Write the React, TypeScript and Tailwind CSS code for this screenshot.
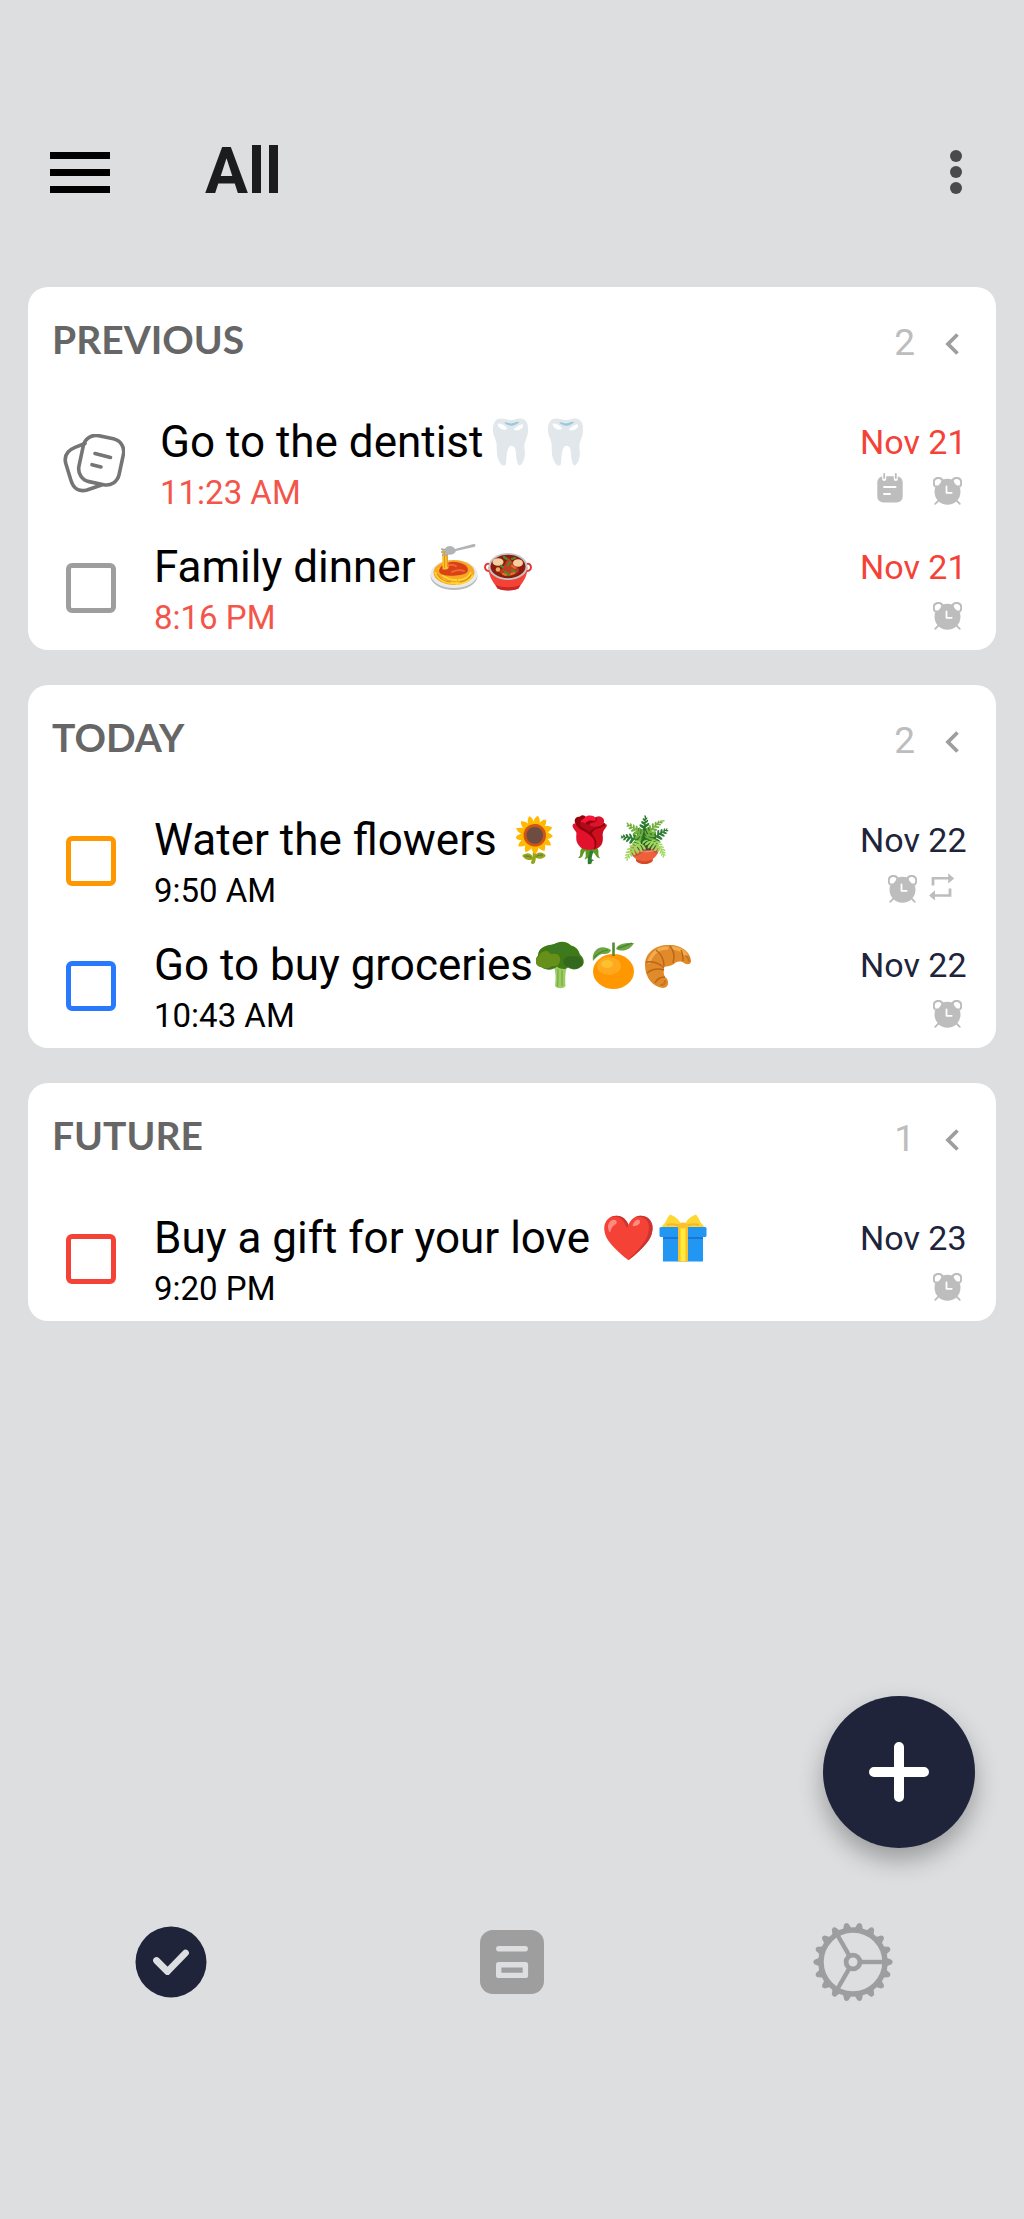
import React from "react";

type TaskItem = {
  title: string;
  emoji?: string;
  pictures?: (() => React.ReactElement)[];
  time: string;
  date: string;
  box?: string;
  note?: boolean;
  icons: ("calendar" | "alarm" | "repeat")[];
  timeColor: string;
  dateColor: string;
};

type Group = { name: string; count: number; items: TaskItem[] };

function Picture({ label, children }: { label: string; children: React.ReactNode }) {
  return (
    <svg role="img" aria-label={label} viewBox="0 0 48 48" fill="none" className="mx-[3px] inline-block size-12 align-[-9px]">
      {children}
    </svg>
  );
}

function Pasta() {
  return (
    <Picture label="spaghetti">
      <ellipse cx="24" cy="33" rx="23.500" ry="14" fill="#b8bcbe" />
      <ellipse cx="24" cy="31" rx="23.500" ry="14" fill="#e8eaeb" />
      <ellipse cx="24" cy="29.500" rx="20.500" ry="12.500" fill="#f9a825" />
      <path d="M5 29c3 8 10 11 18 11M9 25c1 8 9 12 18 12M26 41c8 0 15-4 17-9M28 37c6 0 11-3 13-8M12 36c5 4 11 5 16 4" stroke="#fdd835" strokeWidth="1.800" />
      <path d="M7 31c4 6 9 8 14 8M30 39c5-1 9-3 11-7" stroke="#e08a16" strokeWidth="1.200" />
      <path d="M9 28c0-4 5-8 12-9 8-1 17 3 17 8 0 4-6 5-12 5.500S9 33 9 28z" fill="#d84315" />
      <path d="M13 26c4-4 9-5 13-3M22 29c4-2 9-2 12-1" stroke="#f4683c" strokeWidth="1.800" strokeLinecap="round" />
      <path d="M12 7h5.500l1 18c-2 2-5 2-6 0z" fill="#fbc02d" />
      <path d="M14.500 8v17M17 9l.6 15" stroke="#e69518" strokeWidth="1" />
      <path d="M11 6l6 1M11 9l6 0M12 12h6" stroke="#a5a9ab" strokeWidth="1.500" />
      <path d="M15 5.500c3-4 8-3 10 .5L43.500 1c2.500-.5 2.500 2.500.5 3L26 8c-2 4-7 5-10 2.500z" fill="#b0b4b6" />
    </Picture>
  );
}

function Pot() {
  return (
    <Picture label="pot of food">
      <path d="M7 22C3 19 1 22 1 24.500S4 29 9 28M41 22c4-3 6 0 6 2.500S44 29 39 28" stroke="#e53935" strokeWidth="2" />
      <path d="M4.500 24h39c0 12-7 17-9 21.500-5 2.500-16 2.500-21 0C11.500 41 4.500 36 4.500 24z" fill="#f44336" />
      <path d="M11.500 42c7 3 18 3 25 0l-2 3.500c-5 2.500-16 2.500-21 0z" fill="#c62828" />
      <ellipse cx="24" cy="23.500" rx="19.500" ry="13.500" fill="#c3c7c9" />
      <ellipse cx="24" cy="23.500" rx="17.500" ry="11.800" fill="#8e1b10" />
      <path d="M15 29c5-4 6-10 10-14 3 5 9 6 10 13-5 6-14 7-20 1z" fill="#bf3d20" />
      <ellipse cx="14" cy="19" rx="5.500" ry="3.800" fill="#f4cf9f" />
      <ellipse cx="34" cy="20" rx="5" ry="3.800" fill="#f4cf9f" />
      <circle cx="14" cy="26.500" r="2.300" fill="#e8b05f" />
      <path d="M20 14l3 2M21 29l4 3M28 27l3 2M24 22l2-3M17 23l2 1M31 15l-3 1" stroke="#4c8c2b" strokeWidth="2.200" strokeLinecap="round" />
      <path d="M28 23l3 2M19 31l3 1M27 31l3-1" stroke="#ef6c28" strokeWidth="2" strokeLinecap="round" />
    </Picture>
  );
}

function Broccoli() {
  return (
    <Picture label="broccoli">
      <path d="M16 22h17c-4 5-4 15-3.500 23-2 3-8 3-10.500 0 1-8 1-17-3-23z" fill="#9ccc65" />
      <path d="M22 28c0 7 0 12-.5 18M26 29v16" stroke="#7cb342" strokeWidth="1.500" />
      <path d="M18 3.500C23-1 32 .5 35 4.500c6 1 8 6 9 9 5 4 5 11 0 13-4 3-9 2-12 0-4 3-9 1-11-1-4 4-11 4-15 1-7-1-8-8-4-12 0-7 7-11 16-11z" fill="#3f7a14" />
      <path d="M3 15c2-6 10-6 12-3 6-1 10 3 9 8-1 5-5 6-8 5-3 3-8 3-11 1-6-1-7-8-2-11z" fill="#66901a" />
      <path d="M29 17c4-3 9-1 10-2 6 0 10 7 6 10-3 4-9 3-12 1-6-1-7-6-4-9z" fill="#33691e" />
      <path d="M13 5c5-3 13-4 17-1 5 2 6 7 3 10-7 2-13-2-17-1-4 0-5-5-3-8z" fill="#3d7a1f" />
    </Picture>
  );
}

function Tangerine() {
  return (
    <Picture label="tangerine">
      <ellipse cx="23.500" cy="30.500" rx="20.500" ry="17.500" fill="#ff9800" />
      <ellipse cx="19" cy="25" rx="12" ry="9" fill="#ffa91f" />
      <ellipse cx="17" cy="23" rx="6" ry="4" fill="#fdc02f" />
      <path d="M23.500 15V1.500" stroke="#558b2f" strokeWidth="2.600" />
      <path d="M3 20C1 9 11 2 21 9c-1 4-5 4-9 4-4 1-6 4-9 7z" fill="#6da544" />
      <path d="M26 8c2-6 10-6 18-6-3 6-11 10-18 6z" fill="#6da544" />
      <path d="M4 17c3-5 8-7 14-8M28 7c5-1 9-3 14-5" stroke="#43852c" strokeWidth="1.200" />
    </Picture>
  );
}

function Croissant() {
  return (
    <Picture label="croissant">
      <path d="M1 24C1 12 11 4 24 4c12-1 23 7 23 16 0 4-4 4-7 2-3-2-7-2-10 1-3 2-7 2-10 3 0 4-1 6 1 10 4 2 5 11-2 11C9 46 1 37 1 24z" fill="#e08a2a" />
      <path d="M5 21C8 12 15 7 23 7M28 7c7 0 11 3 14 7" stroke="#f0ac4e" strokeWidth="3.500" strokeLinecap="round" />
      <path d="M12 9c4 3 8 9 8 16M26 5c4 5 5 11 3 17M37 9c2 4 2 8 2 11M2 21c6-1 14 1 18 6M3 32c5-4 11-5 17-3M11 42c2-4 6-6 10-6" stroke="#b9651a" strokeWidth="1.400" />
      <path d="M42 15c3 2 3 4 3 5M17 44c2 0 4-1 4-4" stroke="#c9741e" strokeWidth="2" strokeLinecap="round" />
    </Picture>
  );
}

function Gift() {
  return (
    <Picture label="gift">
      <path d="M23 13C18 14 6 15 2.500 12 7 10 8 3 11 .5 16 2 22 7 23 13zM25 13c5 1 17 2 20.500-1C41 10 40 3 37 .5 32 2 26 7 25 13z" fill="#fdd835" />
      <path d="M8 11c4-1 10-1 15 2M40 11c-4-1-10-1-15 2" stroke="#f9b52b" strokeWidth="2" />
      <path d="M4 20h40v27.500H4z" fill="#2196f3" />
      <path d="M4 22h40v3H4z" fill="#1976d2" />
      <rect x="0.500" y="13" width="47" height="10" rx="1.500" fill="#2196f3" />
      <path d="M19 10h10v37.500H19z" fill="#fbc02d" />
      <path d="M21.500 12h5v35.500h-5z" fill="#ffeb3b" />
      <ellipse cx="24" cy="11.500" rx="5" ry="3" fill="#fbc02d" />
    </Picture>
  );
}

const RED = "text-[#f44336]";
const NAVY = "text-[#20243b]";

const groups: Group[] = [
  {
    name: "PREVIOUS",
    count: 2,
    items: [
      { title: "Go to the dentist", emoji: "🦷🦷", time: "11:23 AM", date: "Nov 21", note: true, icons: ["calendar", "alarm"], timeColor: "text-[#f4554a]", dateColor: RED },
      { title: "Family dinner ", pictures: [Pasta, Pot], time: "8:16 PM", date: "Nov 21", box: "border-[#9e9e9e]", icons: ["alarm"], timeColor: "text-[#f4554a]", dateColor: RED },
    ],
  },
  {
    name: "TODAY",
    count: 2,
    items: [
      { title: "Water the flowers ", emoji: "🌻🌹🪴", time: "9:50 AM", date: "Nov 22", box: "border-[#ff9800]", icons: ["alarm", "repeat"], timeColor: "text-black", dateColor: NAVY },
      { title: "Go to buy groceries", pictures: [Broccoli, Tangerine, Croissant], time: "10:43 AM", date: "Nov 22", box: "border-[#2979ff]", icons: ["alarm"], timeColor: "text-black", dateColor: NAVY },
    ],
  },
  {
    name: "FUTURE",
    count: 1,
    items: [
      { title: "Buy a gift for your love ", emoji: "❤️", pictures: [Gift], time: "9:20 PM", date: "Nov 23", box: "border-[#f44336]", icons: ["alarm"], timeColor: "text-black", dateColor: NAVY },
    ],
  },
];

function AlarmIcon() {
  return (
    <svg width="29" height="28" viewBox="0 0 29 28" fill="none" className="mt-1" aria-hidden="true">
      <g stroke="#bdbdbd" strokeWidth="1.8" strokeLinecap="round">
        <path d="M2 9.5A4.6 4.6 0 0 1 9.6 2.8M27 9.5A4.6 4.6 0 0 0 19.4 2.8" />
        <path d="M5.5 23.5 2.2 26.8M23.5 23.5l3.3 3.3" />
      </g>
      <circle cx="14.5" cy="14.8" r="13" fill="#bdbdbd" />
      <circle cx="5" cy="5.400" r="3.200" fill="#fff" />
      <circle cx="24" cy="5.400" r="3.200" fill="#fff" />
      <path d="M1.600 8.500A4.500 4.500 0 1 1 9 2.500M27.400 8.500A4.500 4.500 0 1 0 20 2.500" stroke="#bdbdbd" strokeWidth="1.800" strokeLinecap="round" />
      <circle cx="14.500" cy="14.800" r="11.200" fill="#bdbdbd" />
      <path d="M13.5 9.5v6.3h5.2" stroke="#fff" strokeWidth="1.8" strokeLinecap="round" strokeLinejoin="round" />
    </svg>
  );
}

function CalendarIcon() {
  return (
    <svg width="26" height="30" viewBox="0 0 26 30" fill="none" aria-hidden="true">
      <rect x="0.3" y="3.2" width="25.4" height="26.4" rx="6" fill="#bdbdbd" />
      <path d="M7.2 1v5M18.8 1v5" stroke="#fff" strokeWidth="4" strokeLinecap="round" />
      <path d="M7.2 1v4M18.8 1v4" stroke="#bdbdbd" strokeWidth="1.8" strokeLinecap="round" />
      <path d="M7 14h11.5M7 21h6" stroke="#fff" strokeWidth="2" strokeLinecap="round" />
    </svg>
  );
}

function RepeatIcon() {
  return (
    <svg width="26" height="28" viewBox="0 0 26 28" fill="#bdbdbd" className="mt-0.5" aria-hidden="true">
      <path d="M2.6 12.4V4h16.6V.2l6 5.2-6 5.2V6.6H5.4v5.8zM22.4 15.4v8.4H6v3.8L0 22.4l6-5.2v4h13.6v-5.8z" />
    </svg>
  );
}

const statusIcons = { alarm: AlarmIcon, calendar: CalendarIcon, repeat: RepeatIcon };

function NoteIcon() {
  return (
    <svg width="62" height="60" viewBox="0 0 62 60" fill="none" stroke="#757575" strokeWidth="3.6" strokeLinecap="round" aria-hidden="true">
      <rect x="-20.5" y="-23.5" width="41" height="47" rx="13" transform="translate(38.2 26.2) rotate(12)" />
      <path d="M22 9.5 12 13.4C4.500 16.500 .8 22 2.800 29.500L8 46.500c2.500 8.500 8.500 11.500 16 9.500l14.500-5" />
      <path d="M32 19.500l15.500 4M29 30.700l9 2.200" />
    </svg>
  );
}

function GearIcon() {
  const teeth = Array.from({ length: 18 }, (_, i) => i * 20);
  return (
    <svg width="80" height="80" viewBox="-40 -40 80 80" fill="none" stroke="#9e9e9e" aria-hidden="true">
      <circle r="32" strokeWidth="5.500" />
      <circle r="6.900" strokeWidth="4.800" />
      {[0, 120, 240].map((a) => (
        <path key={a} d="M8 0H30" strokeWidth="4.400" transform={`rotate(${a})`} />
      ))}
      {teeth.map((a) => (
        <path key={a} d="M33-4.500 38.500-2.200Q40.800 0 38.500 2.200L33 4.500z" fill="#9e9e9e" stroke="none" transform={`rotate(${a})`} />
      ))}
    </svg>
  );
}

function Task({ item, id }: { item: TaskItem; id: string }) {
  return (
    <li className="flex pb-3">
      <div className={item.note ? "w-[132px] pt-[34px] pl-[35px]" : "w-[126px] pt-[38px] pl-[38px]"}>
        {item.note ? (
          <NoteIcon />
        ) : (
          <input id={id} type="checkbox" className={`block size-[50px] appearance-none rounded-md border-5 ${item.box}`} />
        )}
      </div>
      <label htmlFor={item.note ? undefined : id} className="flex-1 pt-3.5">
        <span className="block h-14 whitespace-pre text-[44px] leading-[56px] text-black">
          {item.title}
          {item.emoji}
          {item.pictures?.map((Drawing, i) => <Drawing key={i} />)}
        </span>
        <span className={`mt-[3px] block text-[33px] leading-10 ${item.timeColor}`}>{item.time}</span>
      </label>
      <div className="w-[136px] pt-[22px]">
        <p className={`text-[34px] leading-10 whitespace-nowrap ${item.dateColor}`}>{item.date}</p>
        <div className={`flex items-start justify-end pt-[11px] ${item.icons.includes("repeat") ? "gap-3 pr-[41px]" : "gap-[30px] pr-[34px]"}`}>
          {item.icons.map((name) => {
            const Icon = statusIcons[name];
            return <Icon key={name} />;
          })}
        </div>
      </div>
    </li>
  );
}

export default function App() {
  return (
    <div className="flex min-h-screen flex-col bg-[#dddee0] font-[Roboto,'Noto_Color_Emoji',sans-serif]">
      <header className="flex items-center pt-[132px] pr-12 pl-[50px]">
        <button type="button" aria-label="Menu" className="flex w-15 flex-col gap-2.5">
          <span className="h-[7px] w-full bg-black" />
          <span className="h-[7px] w-full bg-black" />
          <span className="h-[7px] w-full bg-black" />
        </button>
        <h1 className="flex-1 pl-[95px] text-[64px] leading-20 font-bold text-[#1c1c1e]">All</h1>
        <button type="button" aria-label="More options">
          <svg width="40" height="48" viewBox="0 0 40 48" fill="#4a4a4c" aria-hidden="true">
            <circle cx="20" cy="8" r="6" />
            <circle cx="20" cy="24" r="6" />
            <circle cx="20" cy="40" r="6" />
          </svg>
        </button>
      </header>

      <main className="mt-[75px] flex flex-col gap-[35px] px-7">
        {groups.map((g) => (
          <section key={g.name} className="rounded-[20px] bg-white">
            <div className="flex items-start pt-7 pr-9 pb-[37px] pl-6">
              <h2 className="flex-1 font-[Lato,sans-serif] text-[39px] leading-12 font-bold text-[#666666]">{g.name}</h2>
              <span className="pt-2 pr-[29px] text-[37px] leading-10 text-[#bdbdbd]">{g.count}</span>
              <button type="button" aria-label={`Collapse ${g.name}`} className="mt-[18px]">
                <svg width="16" height="22" viewBox="0 0 16 22" fill="none" stroke="#9e9e9e" strokeWidth="3.800" aria-hidden="true">
                  <path d="M13.500 1.500 4 11l9.500 9.500" />
                </svg>
              </button>
            </div>
            <ul>
              {g.items.map((item, i) => (
                <Task key={item.title} item={item} id={`${g.name}-${i}`} />
              ))}
            </ul>
          </section>
        ))}
      </main>

      <div className="mt-auto flex justify-end pr-[49px]">
        <button type="button" aria-label="Add task" className="flex size-[152px] items-center justify-center rounded-full bg-[#20243b] shadow-[0_12px_24px_rgba(0,0,0,0.300)]">
          <svg width="60" height="60" viewBox="0 0 60 60" stroke="#fff" strokeWidth="10" strokeLinecap="round" aria-hidden="true">
            <path d="M30 5v50M5 30h50" />
          </svg>
        </button>
      </div>

      <nav className="grid grid-cols-3 items-center justify-items-center pt-[74px] pb-[217px]">
        <a href="#tasks" aria-label="Tasks">
          <svg width="72" height="72" viewBox="0 0 72 72" fill="none" aria-hidden="true">
            <circle cx="36" cy="36" r="35.500" fill="#20243b" />
            <path d="M21.500 34.500 32.500 45.500 50.500 27" stroke="#dddee0" strokeWidth="6.800" strokeLinecap="round" strokeLinejoin="round" />
          </svg>
        </a>
        <a href="#notes" aria-label="Notes">
          <svg width="64" height="64" viewBox="0 0 64 64" fill="none" stroke="#dddee0" aria-hidden="true">
            <rect width="64" height="64" rx="13" fill="#9e9e9e" stroke="none" />
            <path d="M18.800 18.700h26.400" strokeWidth="5.400" strokeLinecap="round" />
            <rect x="18.700" y="34.700" width="26.700" height="10.700" strokeWidth="5.400" strokeLinejoin="round" />
          </svg>
        </a>
        <a href="#settings" aria-label="Settings">
          <GearIcon />
        </a>
      </nav>
    </div>
  );
}
